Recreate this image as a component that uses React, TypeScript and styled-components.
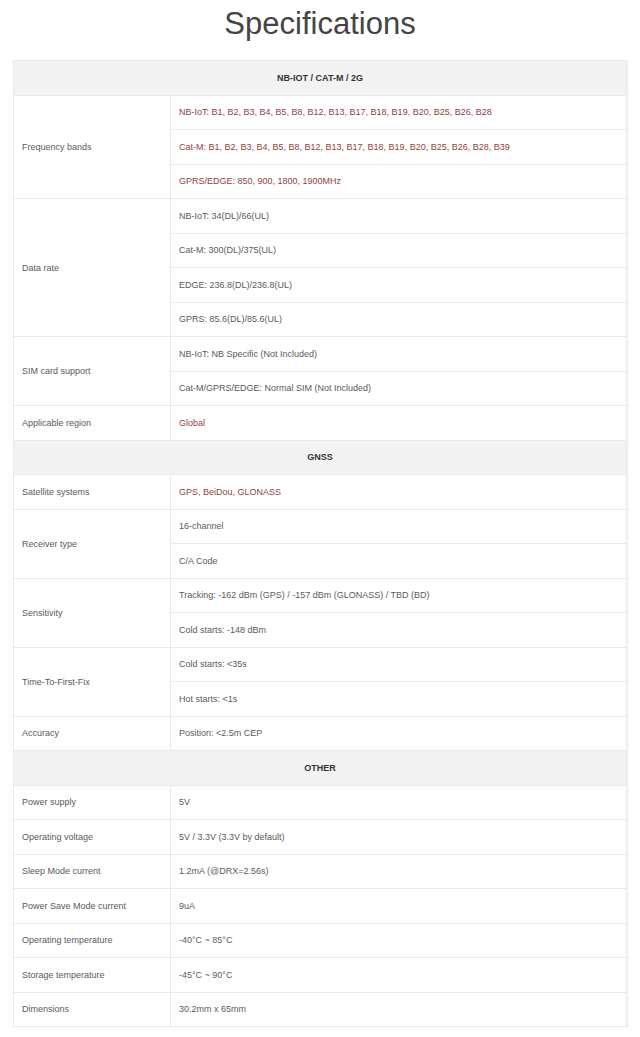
import React from "react";
import styled, { createGlobalStyle } from "styled-components";

const Global = createGlobalStyle`
  html, body { margin: 0; padding: 0; background: #ffffff; }
  body { font-family: "Liberation Sans", Arial, sans-serif; }
`;

const Page = styled.div`
  width: 640px;
  padding: 0 13px;
  box-sizing: border-box;
`;

const Title = styled.h1`
  margin: 0 0 12px;
  height: 48px;
  line-height: 48px;
  text-align: center;
  font-size: 31px;
  font-weight: 400;
  color: #444444;
`;

const Table = styled.table`
  width: 100%;
  border-collapse: collapse;
  border: 1px solid #e9e9e9;
  box-shadow: 1px 1px 2px rgba(0, 0, 0, 0.06);
  font-size: 9px;
`;

const Row = styled.tr`
  height: 34.5px;
`;

const SectionCell = styled.th`
  background: #f3f3f3;
  color: #333333;
  font-weight: 700;
  text-align: center;
  border: 1px solid #e9e9e9;
  padding: 0;
`;

const LabelCell = styled.td`
  width: 140px;
  padding: 0 8px;
  color: #5a5a5a;
  border: 1px solid #e9e9e9;
  vertical-align: middle;
`;

const ValueCell = styled.td<{ $accent?: boolean }>`
  padding: 0 8px;
  color: ${(p) => (p.$accent ? "#8f3f3f" : "#5a5a5a")};
  border: 1px solid #e9e9e9;
  vertical-align: middle;
`;

type Item = { label: string; values: string[]; accent?: boolean };
type Section = { title: string; items: Item[] };

const sections: Section[] = [
  {
    title: "NB-IOT / CAT-M / 2G",
    items: [
      {
        label: "Frequency bands",
        accent: true,
        values: [
          "NB-IoT: B1, B2, B3, B4, B5, B8, B12, B13, B17, B18, B19, B20, B25, B26, B28",
          "Cat-M: B1, B2, B3, B4, B5, B8, B12, B13, B17, B18, B19, B20, B25, B26, B28, B39",
          "GPRS/EDGE: 850, 900, 1800, 1900MHz",
        ],
      },
      {
        label: "Data rate",
        values: [
          "NB-IoT: 34(DL)/66(UL)",
          "Cat-M: 300(DL)/375(UL)",
          "EDGE: 236.8(DL)/236.8(UL)",
          "GPRS: 85.6(DL)/85.6(UL)",
        ],
      },
      {
        label: "SIM card support",
        values: ["NB-IoT: NB Specific (Not Included)", "Cat-M/GPRS/EDGE: Normal SIM (Not Included)"],
      },
      { label: "Applicable region", accent: true, values: ["Global"] },
    ],
  },
  {
    title: "GNSS",
    items: [
      { label: "Satellite systems", accent: true, values: ["GPS, BeiDou, GLONASS"] },
      { label: "Receiver type", values: ["16-channel", "C/A Code"] },
      {
        label: "Sensitivity",
        values: ["Tracking: -162 dBm (GPS) / -157 dBm (GLONASS) / TBD (BD)", "Cold starts: -148 dBm"],
      },
      { label: "Time-To-First-Fix", values: ["Cold starts: <35s", "Hot starts: <1s"] },
      { label: "Accuracy", values: ["Position: <2.5m CEP"] },
    ],
  },
  {
    title: "OTHER",
    items: [
      { label: "Power supply", values: ["5V"] },
      { label: "Operating voltage", values: ["5V / 3.3V (3.3V by default)"] },
      { label: "Sleep Mode current", values: ["1.2mA (@DRX=2.56s)"] },
      { label: "Power Save Mode current", values: ["9uA"] },
      { label: "Operating temperature", values: ["-40°C ~ 85°C"] },
      { label: "Storage temperature", values: ["-45°C ~ 90°C"] },
      { label: "Dimensions", values: ["30.2mm x 65mm"] },
    ],
  },
];

export default function App() {
  return (
    <Page>
      <Global />
      <Title>Specifications</Title>
      <Table>
        <tbody>
          {sections.map((section) => (
            <React.Fragment key={section.title}>
              <Row>
                <SectionCell colSpan={2}>{section.title}</SectionCell>
              </Row>
              {section.items.map((item) =>
                item.values.map((value, i) => (
                  <Row key={item.label + i}>
                    {i === 0 && <LabelCell rowSpan={item.values.length}>{item.label}</LabelCell>}
                    <ValueCell $accent={item.accent}>{value}</ValueCell>
                  </Row>
                ))
              )}
            </React.Fragment>
          ))}
        </tbody>
      </Table>
    </Page>
  );
}
